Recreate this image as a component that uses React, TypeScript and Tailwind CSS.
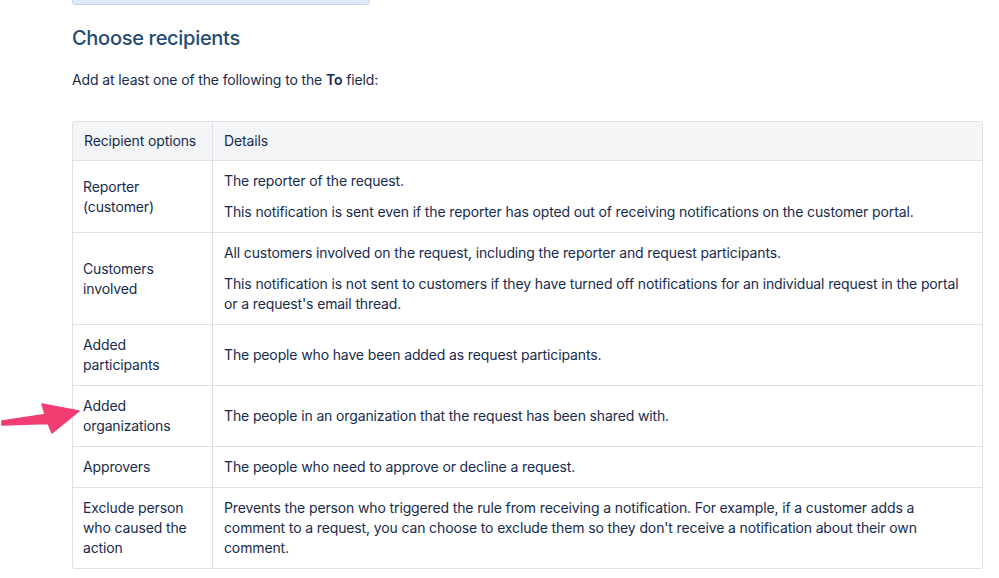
import React from 'react'

type Row = { option: React.ReactNode; details: string[] }

const rows: Row[] = [
  {
    option: <>Reporter<br />(customer)</>,
    details: [
      'The reporter of the request.',
      'This notification is sent even if the reporter has opted out of receiving notifications on the customer portal.',
    ],
  },
  {
    option: <>Customers<br />involved</>,
    details: [
      'All customers involved on the request, including the reporter and request participants.',
      "This notification is not sent to customers if they have turned off notifications for an individual request in the portal or a request's email thread.",
    ],
  },
  {
    option: <>Added<br />participants</>,
    details: ['The people who have been added as request participants.'],
  },
  {
    option: <>Added<br />organizations</>,
    details: ['The people in an organization that the request has been shared with.'],
  },
  {
    option: 'Approvers',
    details: ['The people who need to approve or decline a request.'],
  },
  {
    option: <>Exclude person<br />who caused the<br />action</>,
    details: [
      "Prevents the person who triggered the rule from receiving a notification. For example, if a customer adds a comment to a request, you can choose to exclude them so they don't receive a notification about their own comment.",
    ],
  },
]

function Arrow() {
  return (
    <svg width="84" height="36" viewBox="0 0 84 36" className="absolute left-0 top-[400px]">
      <path d="M2 21 L45 14.5 L42 4 L79 11 L52 33 L48 23.5 L2 25 Z" fill="#f23d73" stroke="#f23d73" strokeWidth="1.5" strokeLinejoin="round" />
    </svg>
  )
}

export default function App() {
  return (
    <div className="relative w-[999px] h-[578px] bg-white text-[#172b4d] text-[14px] leading-5 tracking-[-0.13px] overflow-hidden font-['Inter',sans-serif]">
      <div className="pl-[72px] pr-4">
        <div className="w-[298px] h-[6px] -mt-px bg-[#deebff] border border-[#c6d6ef] rounded-b-[3px]" />
        <h2 className="mt-[21px] text-[20px] leading-6 font-medium tracking-[-0.3px] text-[#234b74]">Choose recipients</h2>
        <p className="mt-[20px]">
          Add at least one of the following to the <b className="font-semibold">To</b> field:
        </p>
        <table className="mt-[31px] w-[911px] border-separate border-spacing-0 border border-[#dfe1e6] rounded-[3px] table-fixed">
          <colgroup>
            <col className="w-[140px]" />
            <col />
          </colgroup>
          <thead>
            <tr className="bg-[#f4f5f7]">
              <th className="text-left font-normal px-[11px] py-[9px] border-r border-[#dfe1e6]">Recipient options</th>
              <th className="text-left font-normal px-[11px] py-[9px]">Details</th>
            </tr>
          </thead>
          <tbody>
            {rows.map((r, i) => (
              <tr key={i}>
                <td className="align-middle pl-[10px] pr-[11px] py-[10px] border-t border-r border-[#dfe1e6]">{r.option}</td>
                <td className="align-middle px-[11px] py-[10px] border-t border-[#dfe1e6]">
                  <div className="flex flex-col gap-[11px]">
                    {r.details.map((d, j) => (
                      <p key={j}>{d}</p>
                    ))}
                  </div>
                </td>
              </tr>
            ))}
          </tbody>
        </table>
      </div>
      <Arrow />
    </div>
  )
}
